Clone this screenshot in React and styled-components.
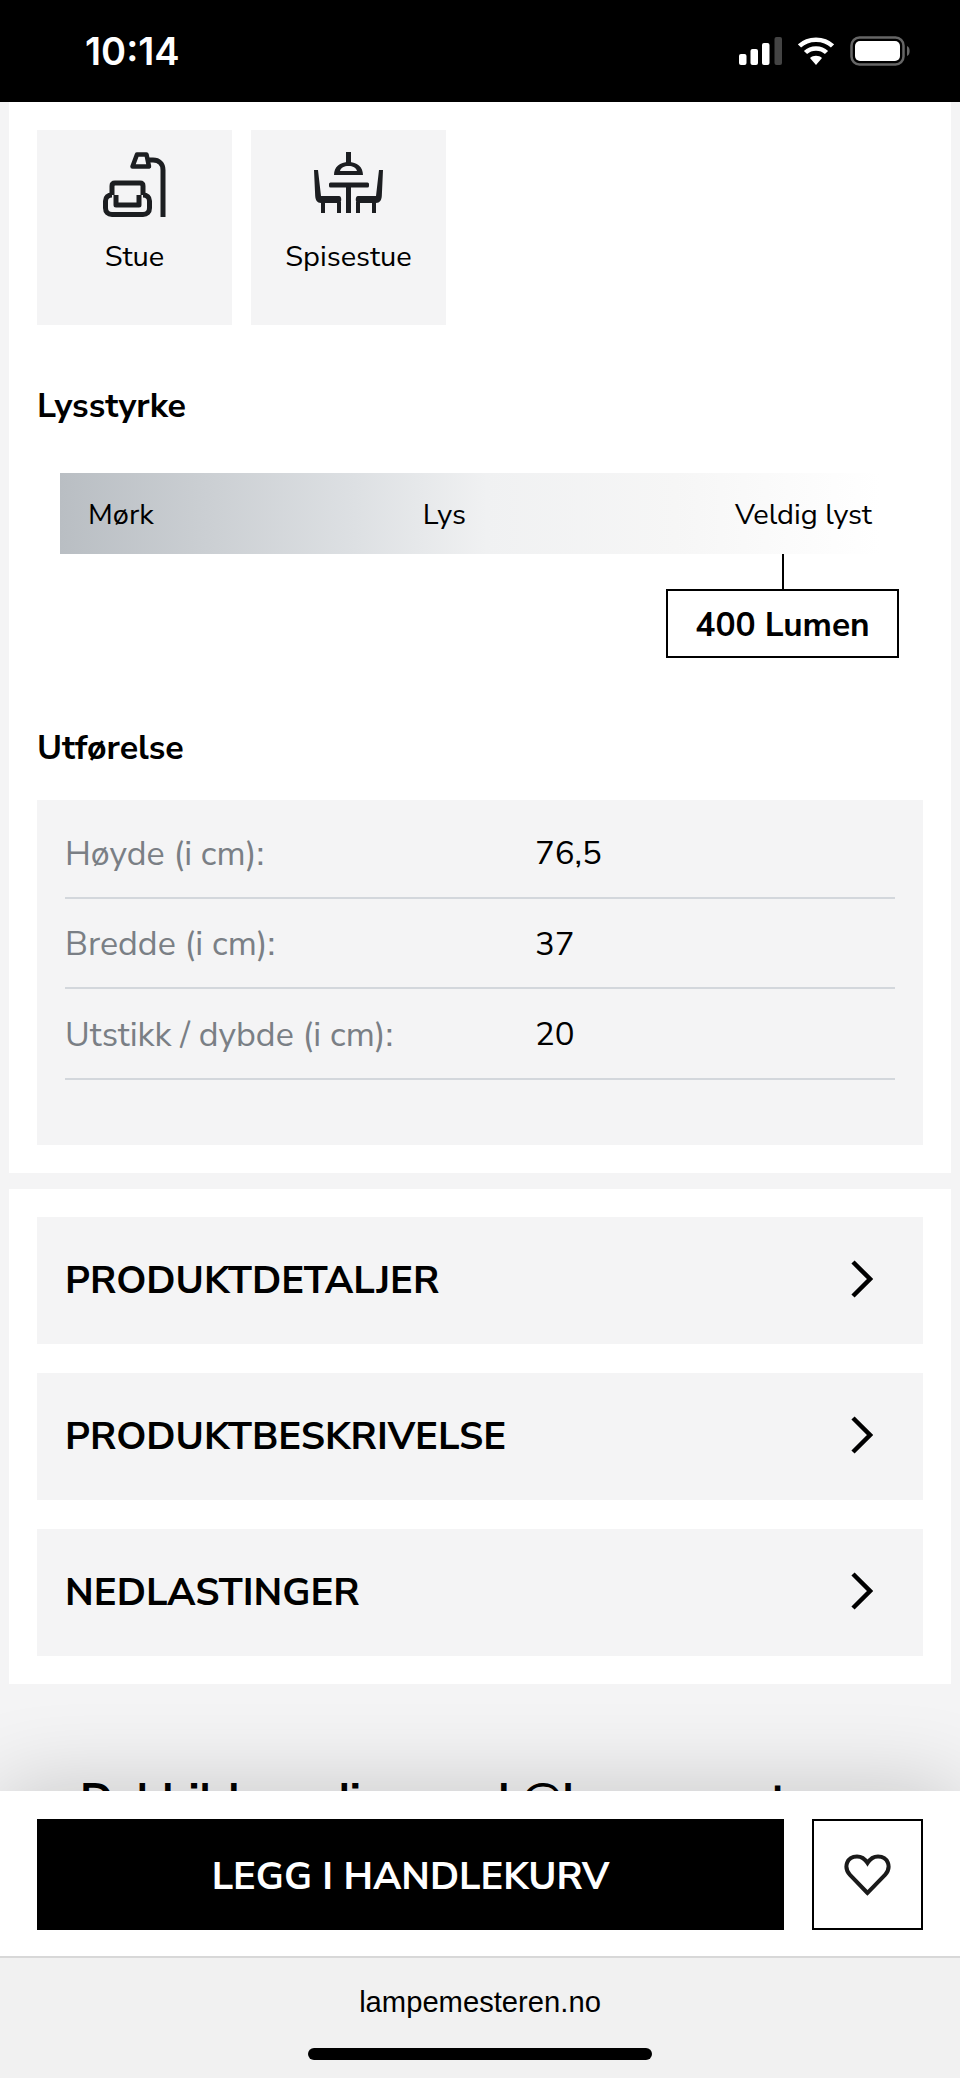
import React from "react";
import styled, { createGlobalStyle } from "styled-components";

const GlobalStyle = createGlobalStyle`
  html, body {
    margin: 0;
    padding: 0;
    background: #f4f4f5;
    font-family: "Nunito Sans", "Noto Sans", sans-serif;
    color: #000;
  }
  * { box-sizing: border-box; }
`;

const Screen = styled.div`
  width: 960px;
  height: 2078px;
  display: flex;
  flex-direction: column;
  overflow: hidden;
`;

const StatusBar = styled.div`
  height: 102px;
  flex: none;
  background: #000;
  display: flex;
  align-items: center;
  justify-content: space-between;
  padding: 0 49px 0 85px;
  color: #fff;
`;

const Clock = styled.span`
  font-family: "Inter", sans-serif;
  font-size: 38px;
  font-weight: 600;
`;

const StatusIcons = styled.div`
  display: flex;
  align-items: center;
  gap: 16px;
`;

const Scroller = styled.div`
  flex: 1;
  min-height: 0;
  overflow: hidden;
  display: flex;
  flex-direction: column;
  gap: 16px;
  padding: 0 9px;
`;

const Card = styled.section`
  flex: none;
  background: #fff;
  padding: 28px;
`;

const RoomRow = styled.div`
  display: flex;
  gap: 19px;
`;

const RoomTile = styled.div`
  width: 195px;
  height: 195px;
  background: #f4f4f5;
  display: flex;
  flex-direction: column;
  align-items: center;
  padding-top: 22px;
  font-size: 29px;
`;

const RoomIcon = styled.div`
  height: 65px;
  display: flex;
  align-items: flex-start;
`;

const RoomLabel = styled.span`
  margin-top: 20px;
  line-height: 40px;
`;

const Heading = styled.h3`
  margin: ${(p) => p.$margin};
  font-size: 34px;
  line-height: 40px;
  font-weight: 700;
`;

const Scale = styled.div`
  margin-left: 23px;
  width: 820px;
  height: 81px;
  background: linear-gradient(90deg, #b9bec3 0%, #dde0e3 36%, #f0f1f2 52%, #f6f6f6 75%, #fff 100%);
  display: flex;
  align-items: center;
  justify-content: space-between;
  padding: 2px 8px 0 28px;
  font-size: 29px;
`;

const ScaleLabel = styled.span``;

const LumenWrap = styled.div`
  display: flex;
  flex-direction: column;
  align-items: center;
  width: 233px;
  margin-left: 629px;
`;

const LumenTick = styled.div`
  width: 2px;
  height: 35px;
  background: #000;
`;

const LumenBox = styled.div`
  width: 233px;
  height: 69px;
  border: 2px solid #000;
  display: flex;
  align-items: center;
  justify-content: center;
  padding-top: 2px;
  font-size: 33.5px;
  font-weight: 700;
`;

const SpecTable = styled.div`
  background: #f4f4f5;
  padding: 8px 28px 65px;
`;

const SpecRow = styled.div`
  display: flex;
  align-items: center;
  height: 90.5px;
  padding-top: 3px;
  border-bottom: 2px solid #d3d7dc;
  font-size: 34px;
`;

const SpecName = styled.span`
  width: 470px;
  color: #7a7f85;
`;

const SpecValue = styled.span`
  font-size: 33px;
`;

const AccordionList = styled.div`
  display: flex;
  flex-direction: column;
  gap: 29px;
`;

const AccordionRow = styled.div`
  height: 127px;
  background: #f4f4f5;
  display: flex;
  align-items: center;
  justify-content: space-between;
  padding: 1px 50px 0 28px;
  font-size: 38.4px;
  font-weight: 700;
`;

const Teaser = styled.div`
  flex: none;
  padding: 70px 0 0 71px;
  font-size: 43.5px;
  font-weight: 700;
  white-space: nowrap;
`;

const ActionBar = styled.div`
  flex: none;
  height: 167px;
  background: #fff;
  border-bottom: 2px solid #d8d8d8;
  box-shadow: 0 0 90px rgba(0, 0, 0, 0.2);
  display: flex;
  gap: 28px;
  padding: 28px 37px 0;
  position: relative;
`;

const BuyButton = styled.button`
  flex: 1;
  height: 111px;
  background: #000;
  color: #fff;
  border: 0;
  padding: 3px 0 0;
  font: inherit;
  font-size: 38.2px;
  font-weight: 700;
`;

const WishButton = styled.button`
  width: 111px;
  height: 111px;
  background: #fff;
  border: 2px solid #000;
  display: flex;
  align-items: center;
  justify-content: center;
  padding: 0;
`;

const BrowserBar = styled.div`
  flex: none;
  height: 120px;
  background: #f1f1f1;
  display: flex;
  flex-direction: column;
  align-items: center;
  padding-top: 26px;
  position: relative;
`;

const Domain = styled.span`
  font-family: "Liberation Sans", sans-serif;
  font-size: 29.2px;
  line-height: 36px;
`;

const HomeBar = styled.div`
  width: 344px;
  height: 12px;
  margin-top: 28px;
  border-radius: 6px;
  background: #000;
`;

const SignalIcon = () => (
  <svg width="43" height="28" viewBox="0 0 43 28">
    <rect x="0" y="17" width="7.5" height="11" rx="2" fill="#fff" />
    <rect x="11.5" y="12" width="7.5" height="16" rx="2" fill="#fff" />
    <rect x="23" y="6" width="7.5" height="22" rx="2" fill="#fff" />
    <rect x="35.5" y="0" width="7.5" height="28" rx="2" fill="#444" />
  </svg>
);

const WifiIcon = () => (
  <svg width="36" height="28" viewBox="0 0 36 28" fill="none" stroke="#fff" strokeWidth="4.5">
    <path d="M1.5 9 C10 0.5 26 0.5 34.5 9" />
    <path d="M7.5 15.5 C13 10 23 10 28.5 15.5" />
    <path d="M18 28 L12 21 C15 18 21 18 24 21 Z" fill="#fff" stroke="none" />
  </svg>
);

const BatteryIcon = () => (
  <svg width="61" height="30" viewBox="0 0 61 30">
    <rect x="1.5" y="1.5" width="52" height="27" rx="8" fill="none" stroke="#666" strokeWidth="2.5" />
    <rect x="5" y="5" width="45" height="20" rx="5" fill="#fff" />
    <path d="M57 10 C60.5 11 60.5 19 57 20 Z" fill="#666" />
  </svg>
);

const LampChairIcon = () => (
  <svg width="63" height="65" viewBox="0 0 63 65" fill="none" stroke="#1c1e21" strokeWidth="5" strokeLinejoin="round">
    <path d="M29.5 14.5 L34 2.5 H43.5 L46 14.5 Z" strokeWidth="4.5" />
    <path d="M45 8 H50 C56 8 60 12 60 18 V65" />
    <path d="M9 43 V34 C9 32 10 31 12 31 H37 C39 31 40 32 40 34 V43" />
    <path d="M13 43 V53 H36 V43" />
    <path d="M9 43 C5 43 2.5 45.5 2.5 49 V56 C2.5 60 5 62.5 9 62.5 H40 C44 62.5 46.5 60 46.5 56 V49 C46.5 45.5 44 43 40 43" />
  </svg>
);

const DiningIcon = () => (
  <svg width="69" height="61" viewBox="0 0 69 61" fill="#1c1e21">
    <rect x="32" y="0" width="5" height="11" />
    <path d="M20 23 C20 15 26 10 34.5 10 C43 10 49 15 49 23 Z M26 19 H43 C42 15.5 39 14 34.5 14 C30 14 27 15.5 26 19 Z" fillRule="evenodd" />
    <rect x="15" y="30.5" width="40" height="5" rx="1.5" />
    <rect x="32" y="33" width="5" height="28" />
    <path d="M0 18 L4 18 L7 44 H25 C28 44 28 51 25 51 H7 C3 51 1.5 48 1.2 44 Z" />
    <path d="M69 18 L65 18 L62 44 H44 C41 44 41 51 44 51 H62 C66 51 67.5 48 67.8 44 Z" />
    <rect x="7" y="50" width="4" height="11" />
    <rect x="23" y="50" width="4" height="11" />
    <rect x="42" y="50" width="4" height="11" />
    <rect x="58" y="50" width="4" height="11" />
  </svg>
);

const ChevronIcon = () => (
  <svg width="23" height="42" viewBox="0 0 23 42" fill="none" stroke="#000" strokeWidth="4.5">
    <path d="M3 2 L20 19 L3 36" />
  </svg>
);

const HeartIcon = () => (
  <svg width="47" height="42" viewBox="0 0 47 42" fill="none" stroke="#1a1a1a" strokeWidth="4">
    <path d="M23.5 39 L6 21 C-1 13 3 2.5 13 2.5 C18 2.5 21 5 23.5 9 C26 5 29 2.5 34 2.5 C44 2.5 48 13 41 21 Z" />
  </svg>
);

const specs = [
  ["Høyde (i cm):", "76,5"],
  ["Bredde (i cm):", "37"],
  ["Utstikk / dybde (i cm):", "20"],
];

const sections = ["PRODUKTDETALJER", "PRODUKTBESKRIVELSE", "NEDLASTINGER"];

export default function App() {
  return (
    <>
      <GlobalStyle />
      <Screen>
        <StatusBar>
          <Clock>10:14</Clock>
          <StatusIcons>
            <SignalIcon />
            <WifiIcon />
            <BatteryIcon />
          </StatusIcons>
        </StatusBar>
        <Scroller>
          <Card>
            <RoomRow>
              <RoomTile>
                <RoomIcon>
                  <LampChairIcon />
                </RoomIcon>
                <RoomLabel>Stue</RoomLabel>
              </RoomTile>
              <RoomTile>
                <RoomIcon>
                  <DiningIcon />
                </RoomIcon>
                <RoomLabel>Spisestue</RoomLabel>
              </RoomTile>
            </RoomRow>
            <Heading $margin="61px 0 47px">Lysstyrke</Heading>
            <Scale>
              <ScaleLabel>Mørk</ScaleLabel>
              <ScaleLabel>Lys</ScaleLabel>
              <ScaleLabel>Veldig lyst</ScaleLabel>
            </Scale>
            <LumenWrap>
              <LumenTick />
              <LumenBox>400 Lumen</LumenBox>
            </LumenWrap>
            <Heading $margin="70px 0 32px">Utførelse</Heading>
            <SpecTable>
              {specs.map(([name, value]) => (
                <SpecRow key={name}>
                  <SpecName>{name}</SpecName>
                  <SpecValue>{value}</SpecValue>
                </SpecRow>
              ))}
            </SpecTable>
          </Card>
          <Card>
            <AccordionList>
              {sections.map((title) => (
                <AccordionRow key={title}>
                  {title}
                  <ChevronIcon />
                </AccordionRow>
              ))}
            </AccordionList>
          </Card>
          <Teaser>Del bildene dine med @lampemesteren</Teaser>
        </Scroller>
        <ActionBar>
          <BuyButton>LEGG I HANDLEKURV</BuyButton>
          <WishButton>
            <HeartIcon />
          </WishButton>
        </ActionBar>
        <BrowserBar>
          <Domain>lampemesteren.no</Domain>
          <HomeBar />
        </BrowserBar>
      </Screen>
    </>
  );
}
